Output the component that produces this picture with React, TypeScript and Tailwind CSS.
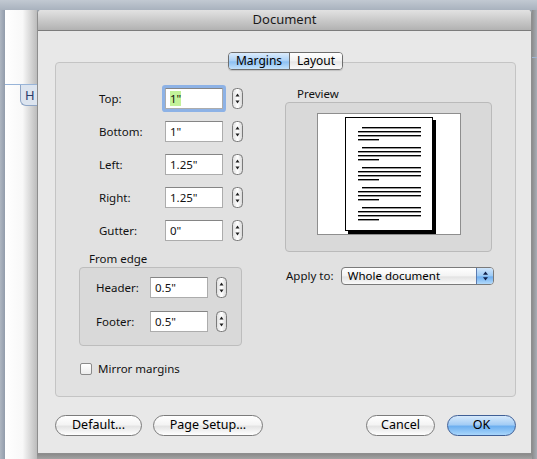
import React from 'react';

const Stepper = () => (
  <svg width="11" height="21" viewBox="0 0 11 21" className="shrink-0">
    <defs>
      <linearGradient id="stp" x1="0" x2="1" y1="0" y2="0">
        <stop offset="0" stopColor="#dcdcdc" />
        <stop offset="0.5" stopColor="#ffffff" />
        <stop offset="1" stopColor="#d6d6d6" />
      </linearGradient>
    </defs>
    <rect x="0.5" y="0.5" width="10" height="20" rx="4" fill="url(#stp)" stroke="#7a7a7a" />
    <path d="M5.5 5.5 L7.5 8.5 L3.5 8.5 Z" fill="#1e1e1e" />
    <path d="M5.5 15.5 L7.5 12.5 L3.5 12.5 Z" fill="#1e1e1e" />
  </svg>
);

const Field = ({ value, focused }: { value: string; focused?: boolean }) => (
  <div
    className={
      'w-[58px] h-[21px] bg-white border border-[#acacac] border-t-[#858585] flex items-center pl-[4px] text-[#111] ' +
      (focused ? 'shadow-[0_0_0_3px_#8db2e6] rounded-[1px]' : '')
    }
  >
    <span className={focused ? 'bg-[#c3f29a] leading-[15px]' : 'leading-[15px]'}>{value}</span>
  </div>
);

const AquaButton = ({ label, width, primary }: { label: string; width: string; primary?: boolean }) => (
  <div
    className={
      width +
      ' h-[21px] rounded-full border flex items-center justify-center text-[12.5px] text-black ' +
      (primary
        ? 'border-[#3f5f96] bg-[linear-gradient(to_bottom,#d6e9fb_0%,#a4cdf5_45%,#6eb0f0_55%,#a9d6fb_100%)]'
        : 'border-[#7b7b7b] bg-[linear-gradient(to_bottom,#ffffff_0%,#f4f4f4_45%,#e4e4e4_55%,#ffffff_100%)]')
    }
  >
    {label}
  </div>
);

const MarginRow = ({ label, value, focused }: { label: string; value: string; focused?: boolean }) => (
  <div className="flex items-center pl-[20px]">
    <span className="w-[66px]">{label}</span>
    <Field value={value} focused={focused} />
    <div className="ml-[9px]">
      <Stepper />
    </div>
  </div>
);

const EdgeRow = ({ label, value }: { label: string; value: string }) => (
  <div className="flex items-center pl-[16px]">
    <span className="w-[54px]">{label}</span>
    <Field value={value} />
    <div className="ml-[8px]">
      <Stepper />
    </div>
  </div>
);

const PagePreview = () => {
  const groups = [0, 1, 2, 3, 4];
  return (
    <svg width="142" height="120" viewBox="0 0 142 120">
      <rect x="30" y="6" width="88" height="114" fill="#000" />
      <rect x="27.5" y="3.5" width="87" height="113" fill="#fff" stroke="#000" />
      {groups.map((g) => {
        const y = 3 + 10 + g * 20;
        return (
          <g key={g} fill="#000">
            <rect x={27 + 17} y={y} width={59} height={1.4} />
            <rect x={27 + 13} y={y + 4} width={63} height={1.4} />
            <rect x={27 + 13} y={y + 8} width={63} height={1.4} />
            <rect x={27 + 13} y={y + 12} width={21} height={1.4} />
          </g>
        );
      })}
    </svg>
  );
};

const Dialog = () => (
  <div className="w-[495px] h-[444px] flex flex-col bg-[#e8e8e8] border-x border-b border-[#8e8e8e] rounded-t-[4px] overflow-hidden">
    {/* title bar */}
    <div className="h-[21px] shrink-0 flex items-center justify-center bg-[linear-gradient(to_bottom,#e2e2e2,#b2b2b2)] border-b border-[#7c7c7c] text-[13px] text-[#1a1a1a]">
      Document
    </div>

    <div className="flex flex-col pt-[21px] pr-[15px] pl-[17px]">
      {/* tabs */}
      <div className="flex justify-center relative z-10">
        <div className="flex h-[18px] rounded-[4px] border border-[#6e6e6e] overflow-hidden text-[12px] text-black shadow-[0_1px_1px_rgba(0,0,0,0.15)]">
          <div className="w-[61px] flex items-center justify-center bg-[linear-gradient(to_bottom,#dcecfc,#a9d0f6_50%,#8cc0f3_55%,#c4e2fb)] border-r border-[#6e6e6e]">
            Margins
          </div>
          <div className="w-[52px] flex items-center justify-center bg-[linear-gradient(to_bottom,#ffffff,#f2f2f2_50%,#e6e6e6_55%,#fbfbfb)]">
            Layout
          </div>
        </div>
      </div>

      {/* group box */}
      <div className="-mt-[8px] h-[335px] rounded-[4px] border border-[#c4c4c4] bg-[#e1e1e1] flex text-[11.5px] text-[#111]">
        {/* left column */}
        <div className="w-[207px] ml-[23px] flex flex-col pt-[25px]">
          <div className="flex flex-col gap-[12px]">
            <MarginRow label="Top:" value={'1"'} focused />
            <MarginRow label="Bottom:" value={'1"'} />
            <MarginRow label="Left:" value={'1.25"'} />
            <MarginRow label="Right:" value={'1.25"'} />
            <MarginRow label="Gutter:" value={'0"'} />
          </div>
          <div className="mt-[10px] pl-[10px] leading-[16px]">From edge</div>
          <div className="w-[163px] h-[79px] rounded-[4px] border border-[#bdbdbd] bg-[#d9d9d9] flex flex-col gap-[13px] pt-[9px]">
            <EdgeRow label="Header:" value={'0.5"'} />
            <EdgeRow label="Footer:" value={'0.5"'} />
          </div>
          <div className="mt-[16px] flex items-center pl-[1px]">
            <div className="w-[12px] h-[12px] rounded-[2px] border border-[#8a8a8a] bg-[linear-gradient(to_bottom,#ffffff,#ececec)]" />
            <span className="ml-[6px] leading-[14px]">Mirror margins</span>
          </div>
        </div>

        {/* right column */}
        <div className="w-[208px] flex flex-col pt-[23px]">
          <div className="pl-[11px] leading-[16px]">Preview</div>
          <div className="w-[207px] h-[150px] -ml-[1px] rounded-[4px] border border-[#bababa] bg-[#d9d9d9] pt-[10px] pl-[31px]">
            <div className="w-[144px] h-[122px] bg-white border border-[#8e8e8e]">
              <PagePreview />
            </div>
          </div>
          <div className="mt-[15px] flex items-center">
            <span className="w-[55px]">Apply to:</span>
            <div className="w-[154px] h-[18px] rounded-[4px] border border-[#7a7a7a] flex overflow-hidden bg-[linear-gradient(to_bottom,#ffffff,#f3f3f3_50%,#e3e3e3_55%,#fafafa)]">
              <span className="flex-1 pl-[6px] leading-[16px] text-black">Whole document</span>
              <div className="w-[17px] border-l border-[#5a7bb0] bg-[linear-gradient(to_bottom,#cfe5fb,#9ccaf5_50%,#6eaef0_55%,#b3dafb)] flex items-center justify-center">
                <svg width="7" height="12" viewBox="0 0 7 12">
                  <path d="M3.5 1.5 L6 4.8 L1 4.8 Z" fill="#10204a" />
                  <path d="M3.5 10.5 L6 7.2 L1 7.2 Z" fill="#10204a" />
                </svg>
              </div>
            </div>
          </div>
        </div>
      </div>

      {/* buttons */}
      <div className="mt-[18px] flex items-center">
        <AquaButton label="Default..." width="w-[87px]" />
        <div className="ml-[11px]">
          <AquaButton label="Page Setup..." width="w-[110px]" />
        </div>
        <div className="ml-auto flex gap-[12px]">
          <AquaButton label="Cancel" width="w-[69px]" />
          <AquaButton label="OK" width="w-[69px]" primary />
        </div>
      </div>
    </div>
  </div>
);

export default function App() {
  return (
    <div className="w-[537px] h-[459px] flex flex-col overflow-hidden bg-[#9aa3ae] font-['Noto_Sans',sans-serif]">
      <div className="h-[10px] shrink-0 bg-[linear-gradient(to_bottom,#c2c9d2,#a9b2be)]" />
      <div className="flex flex-1 min-h-0">
        <div className="w-[5px] shrink-0 bg-[linear-gradient(to_right,#aeb6c1,#929cab)]" />
        <div className="w-[32px] shrink-0 flex flex-col bg-[linear-gradient(to_right,#ffffff_0%,#f8f8f8_55%,#bcbcbc_100%)]">
          <div className="mt-[74px] h-[1px] bg-[#98b4d8]" />
          <div className="ml-[15px] w-[17px] h-[21px] rounded-bl-[6px] border-l border-b border-[#8ea5c6] bg-[#dce4ef] text-[13px] text-[#2a3c6b] pl-[4px] leading-[20px]">
            H
          </div>
        </div>
        <div className="flex flex-col">
          <Dialog />
          <div className="flex-1 bg-[linear-gradient(to_bottom,#8a8a8a,#a3a3a3)]" />
        </div>
        <div className="flex-1 flex flex-col bg-[linear-gradient(to_right,#8c8c8c,#a8adb5)]">
          <div className="mt-[47px] h-[1px] bg-[#9fb4d0]" />
        </div>
      </div>
    </div>
  );
}
